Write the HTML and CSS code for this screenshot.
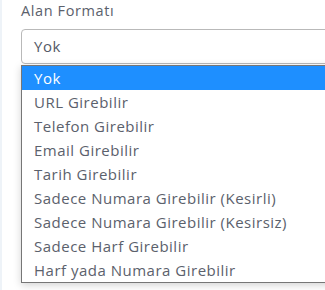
FILE: index.html
```html
<!DOCTYPE html>
<html lang="tr">
<head>
<meta charset="utf-8">
<link rel="stylesheet" href="styles.css">
</head>
<body>
<div class="page">
  <div class="field">
    <label class="label">Alan Formatı</label>
    <div class="select">Yok</div>
    <ul class="menu">
      <li class="opt active">Yok</li>
      <li class="opt">URL Girebilir</li>
      <li class="opt">Telefon Girebilir</li>
      <li class="opt">Email Girebilir</li>
      <li class="opt">Tarih Girebilir</li>
      <li class="opt">Sadece Numara Girebilir (Kesirli)</li>
      <li class="opt">Sadece Numara Girebilir (Kesirsiz)</li>
      <li class="opt">Sadece Harf Girebilir</li>
      <li class="opt">Harf yada Numara Girebilir</li>
    </ul>
  </div>
</div>
</body>
</html>
```

FILE: styles.css
```css
html, body {
  margin: 0;
  padding: 0;
  background: #ffffff;
  overflow: hidden;
}
body {
  font-family: "Open Sans", "Noto Sans", sans-serif;
  color: #5b616c;
}
.page {
  border-left: 2px solid #eef3f8;
  height: 290px;
  box-sizing: border-box;
  padding: 1px 0 0 19px;
}
.field {
  width: 340px;
}
.label {
  display: block;
  font-size: 14.5px;
  letter-spacing: 0.6px;
  line-height: 20px;
  height: 28px;
  color: #5b616c;
}
.select {
  box-sizing: border-box;
  height: 35px;
  border: 1px solid #b9b9b9;
  border-radius: 4px;
  padding: 0 12px;
  font-size: 15px;
  letter-spacing: 0.5px;
  line-height: 33px;
  color: #555a66;
}
.menu {
  list-style: none;
  margin: 1px 0 0 0;
  padding: 0;
  border: 1px solid #767676;
  background: #fff;
  box-shadow: 0 2px 8px rgba(0,0,0,0.18);
}
.opt {
  height: 24px;
  line-height: 24px;
  padding: 0 12px;
  font-size: 15px;
  letter-spacing: 0.5px;
  color: #5b616c;
  white-space: nowrap;
}
.opt.active {
  background: #1e8fff;
  color: #ffffff;
}
```
